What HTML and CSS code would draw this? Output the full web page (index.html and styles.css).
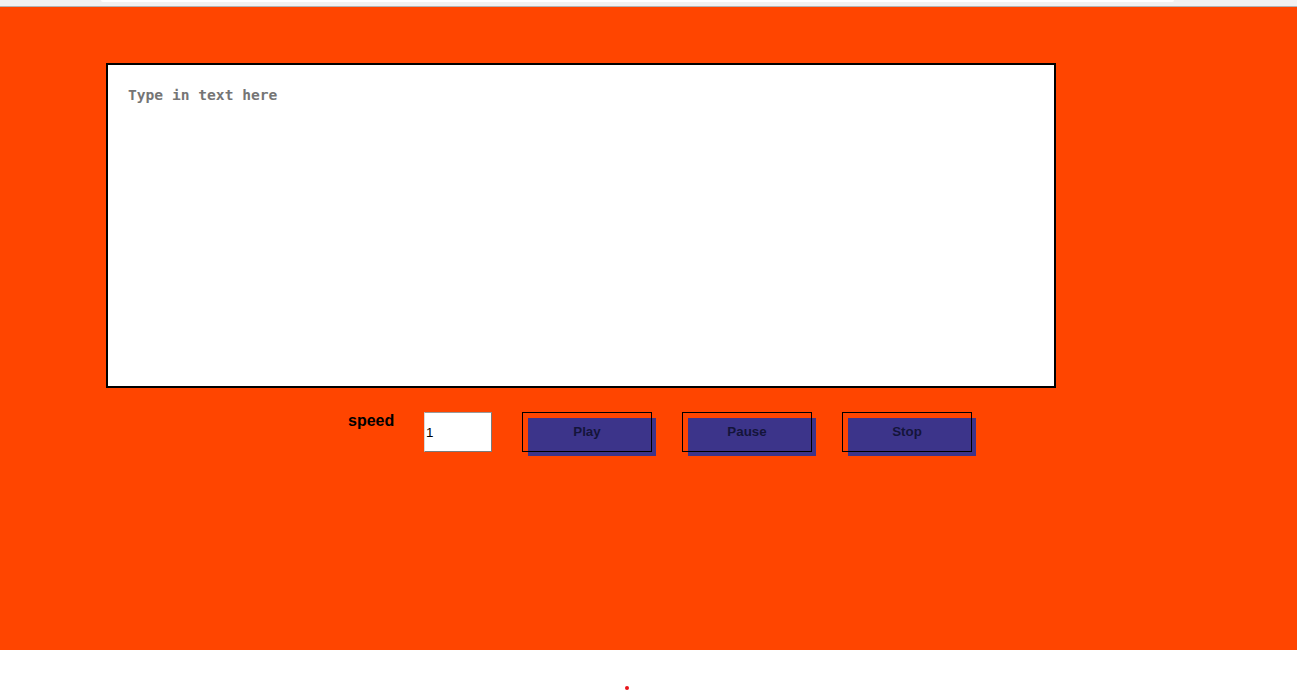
FILE: index.html
```html
<!DOCTYPE html>
<html>
<head>
<meta charset="utf-8">
<link rel="stylesheet" href="styles.css">
</head>
<body>
<div class="topbar"><div class="tab"></div></div>
<main class="stage">
  <textarea class="editor" placeholder="Type in text here"></textarea>
  <div class="controls">
    <label class="speed-label" for="speed">speed</label>
    <input id="speed" class="speed-input" type="text" value="1">
    <button class="btn">Play</button>
    <button class="btn">Pause</button>
    <button class="btn">Stop</button>
  </div>
</main>
<div class="footer"><span class="dot"></span></div>
</body>
</html>
```
FILE: styles.css
```css
html, body {
  margin: 0;
  padding: 0;
  background: #ffffff;
  font-family: "Liberation Sans", Arial, sans-serif;
}

.topbar {
  height: 6px;
  background: #f1f1f1;
  border-bottom: 1px solid #b3b3b3;
  display: flex;
}

.tab {
  margin-left: 101px;
  width: 1073px;
  height: 2px;
  background: #ffffff;
  border-bottom-left-radius: 3px;
  border-bottom-right-radius: 3px;
}

.stage {
  background: #ff4500;
  height: 643px;
  box-sizing: border-box;
  padding: 56px 0 0 106px;
  display: flex;
  flex-direction: column;
  align-items: flex-start;
}

.editor {
  display: block;
  width: 950px;
  height: 325px;
  box-sizing: border-box;
  border: 2px solid #000;
  background: #fff;
  margin: 0;
  padding: 21px 20px;
  resize: none;
  outline: none;
  font-family: "DejaVu Sans Mono", monospace;
  font-weight: bold;
  font-size: 14.6px;
  line-height: 17px;
  color: #222;
}

.editor::placeholder {
  color: #757575;
  opacity: 1;
}

.controls {
  display: flex;
  align-items: flex-start;
  gap: 30px;
  margin-top: 24px;
  margin-left: 242px;
}

.speed-label {
  font-weight: bold;
  font-size: 16px;
  line-height: 18px;
  width: 46px;
  color: #000;
}

.speed-input {
  width: 68px;
  height: 40px;
  box-sizing: border-box;
  margin: 0;
  padding: 0 1px;
  border: 1px solid #7a7a7a;
  border-left-color: #d8d8d8;
  border-top-color: #9a9a9a;
  background: #fff;
  font-family: "Liberation Sans", Arial, sans-serif;
  font-size: 13.33px;
  color: #000;
}

.btn {
  position: relative;
  isolation: isolate;
  width: 130px;
  height: 40px;
  box-sizing: border-box;
  margin: 0;
  padding: 0 0 1px;
  border: none;
  outline: 1px solid #000;
  outline-offset: -1px;
  background: transparent;
  font-family: "Liberation Sans", Arial, sans-serif;
  font-weight: bold;
  font-size: 13.33px;
  color: #14143a;
}

.btn::before {
  content: "";
  position: absolute;
  top: 6px;
  left: 6px;
  width: 128px;
  height: 38px;
  background: #3c348a;
  z-index: -1;
}

.footer {
  height: 42px;
  display: flex;
  justify-content: flex-start;
  align-items: flex-start;
}

.dot {
  width: 4px;
  height: 4px;
  border-radius: 50%;
  background: #e8151b;
  margin-left: 625px;
  margin-top: 36px;
}
```
